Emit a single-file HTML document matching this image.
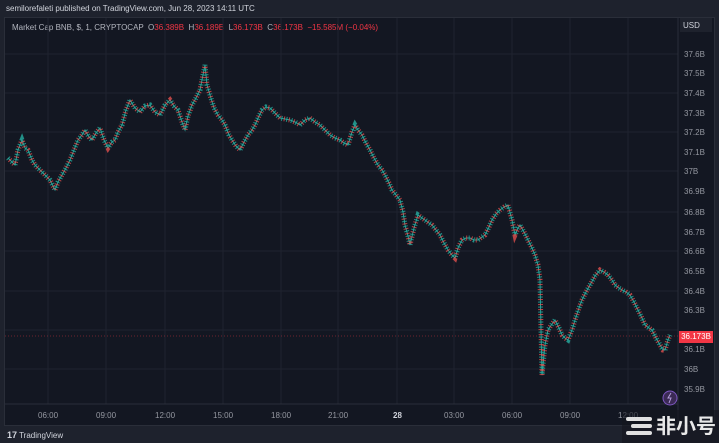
<!DOCTYPE html><html><head><meta charset="utf-8"><style>
body{margin:0;width:719px;height:443px;background:#1e222d;overflow:hidden;font-family:"Liberation Sans","Noto Sans CJK SC",sans-serif;position:relative}
.t{position:absolute;font-size:8px;color:#b2b5be;white-space:nowrap}
.ax{position:absolute;font-size:8px;color:#9598a1}
</style></head><body>
<div class="t" style="left:6px;top:4px;color:#d1d4dc">semilorefaleti published on TradingView.com, Jun 28, 2023 14:11 UTC</div>
<div style="position:absolute;left:4px;top:17px;width:709px;height:407px;background:#131722;border:1px solid #2a2e39"></div>
<div class="t" style="left:12px;top:23px">Market Cap BNB, $, 1, CRYPTOCAP &nbsp;O<span style="color:#f23645">36.389B</span> &nbsp;H<span style="color:#f23645">36.189B</span> &nbsp;L<span style="color:#f23645">36.173B</span> &nbsp;C<span style="color:#f23645">36.173B &nbsp;−15.585M (−0.04%)</span></div>
<div style="position:absolute;left:680px;top:18px;width:32px;height:14px;background:#1e222d;font-size:8px;color:#d1d4dc;padding:3px 0 0 3px;box-sizing:border-box">USD</div>
<svg width="719" height="443" style="position:absolute;left:0;top:0">
<defs><polyline id="p" fill="none" points="8,158 12,162 15,165 18,150 22,140 25,148 28,150 32,160 35,165 40,170 45,175 50,180 55,190 58,182 62,175 66,168 70,160 74,150 78,140 82,135 85,130 89,137 92,140 96,133 100,128 104,140 108,148 112,142 115,140 118,132 122,125 126,110 130,100 135,108 140,112 145,106 150,105 155,112 160,115 165,105 170,100 174,106 178,110 182,122 185,130 188,116 192,105 196,98 200,90 203,75 205,65 207,85 210,95 214,108 218,115 222,120 225,125 229,135 232,140 236,146 240,150 244,142 248,135 252,130 255,125 259,116 262,110 266,107 270,108 275,113 280,118 285,119 290,120 295,122 300,125 305,120 310,118 315,122 320,125 325,130 330,135 335,138 340,140 344,143 348,145 352,132 355,125 358,130 362,135 366,143 370,150 374,158 378,165 382,170 385,175 389,183 392,190 396,195 400,200 403,212 405,225 408,236 410,245 414,228 418,215 422,218 425,220 429,223 432,225 436,230 440,235 444,243 448,250 452,255 455,258 458,248 462,240 466,238 470,238 474,240 478,240 482,237 485,235 489,227 492,220 496,214 500,210 504,207 508,205 512,220 515,235 518,228 520,225 524,232 528,240 532,248 535,255 538,265 540,280 541,330 542,375 545,345 548,330 552,324 555,320 559,328 562,335 565,338 568,340 572,330 575,320 579,308 582,300 586,292 590,285 595,276 600,270 604,272 608,275 612,280 615,285 619,288 622,290 626,292 630,295 634,302 638,310 642,318 645,325 649,328 652,330 656,338 660,345 663,350 665,350 668,340 670,335"/></defs>
<g stroke="#1f2330" stroke-width="1">
<path d="M5 54H678M5 93H678M5 132H678M5 171H678M5 212H678M5 251H678M5 291H678M5 330H678M5 369H678M48 18V404M106 18V404M165 18V404M223 18V404M281 18V404M338 18V404M397 18V404M454 18V404M512 18V404M570 18V404M628 18V404"/>
</g>
<line x1="678" y1="18" x2="678" y2="424" stroke="#2a2e39"/>
<line x1="5" y1="404" x2="678" y2="404" stroke="#2a2e39"/>
<line x1="5" y1="336" x2="678" y2="336" stroke="#f23645" stroke-dasharray="1 2" stroke-width=".6" opacity=".8"/>
<use href="#p" stroke="#26a69a" stroke-width="1"/>
<use href="#p" stroke="#26a69a" stroke-width="5" stroke-dasharray="1 4" opacity=".85"/>
<use href="#p" stroke="#ef5350" stroke-width="5" stroke-dasharray="1 4" stroke-dashoffset="2.5" opacity=".75"/>
<circle cx="670" cy="398" r="7" fill="#3b2a55" stroke="#7e57c2"/>
<path d="M671 393l-3 5h3l-2 5" stroke="#b39ddb" fill="none"/>
</svg>
<div class="ax" style="left:684px;top:50px">37.6B</div><div class="ax" style="left:684px;top:69px">37.5B</div><div class="ax" style="left:684px;top:89px">37.4B</div><div class="ax" style="left:684px;top:109px">37.3B</div><div class="ax" style="left:684px;top:128px">37.2B</div><div class="ax" style="left:684px;top:148px">37.1B</div><div class="ax" style="left:684px;top:167px">37B</div><div class="ax" style="left:684px;top:187px">36.9B</div><div class="ax" style="left:684px;top:208px">36.8B</div><div class="ax" style="left:684px;top:228px">36.7B</div><div class="ax" style="left:684px;top:247px">36.6B</div><div class="ax" style="left:684px;top:267px">36.5B</div><div class="ax" style="left:684px;top:287px">36.4B</div><div class="ax" style="left:684px;top:306px">36.3B</div><div class="ax" style="left:684px;top:345px">36.1B</div><div class="ax" style="left:684px;top:365px">36B</div><div class="ax" style="left:684px;top:385px">35.9B</div>
<div style="position:absolute;left:679px;top:331px;width:34px;height:12px;background:#f23645;color:#fff;font-size:8px;line-height:12px;text-align:center">36.173B</div>
<div class="ax" style="left:38px;top:411px">06:00</div><div class="ax" style="left:96px;top:411px">09:00</div><div class="ax" style="left:155px;top:411px">12:00</div><div class="ax" style="left:213px;top:411px">15:00</div><div class="ax" style="left:271px;top:411px">18:00</div><div class="ax" style="left:328px;top:411px">21:00</div><div class="ax" style="left:393px;top:411px;color:#d1d4dc;font-weight:bold">28</div><div class="ax" style="left:444px;top:411px">03:00</div><div class="ax" style="left:502px;top:411px">06:00</div><div class="ax" style="left:560px;top:411px">09:00</div><div class="ax" style="left:618px;top:411px">12:00</div>
<div class="t" style="left:7px;top:430px;color:#d1d4dc;font-size:8px"><b style="font-size:9px">17</b> TradingView</div>
<div style="position:absolute;left:622px;top:410px;width:97px;height:33px;background:rgba(20,22,30,.6)"></div>
<div style="position:absolute;left:626px;top:416px;width:26px;height:20px">
<div style="position:absolute;left:0;top:1px;width:26px;height:4px;background:#e0e0e0;border-radius:2px"></div>
<div style="position:absolute;left:5px;top:8px;width:21px;height:4px;background:#e0e0e0;border-radius:2px"></div>
<div style="position:absolute;left:0;top:15px;width:26px;height:4px;background:#e0e0e0;border-radius:2px"></div></div>
<div style="position:absolute;left:656px;top:412px;font-size:20px;font-weight:bold;color:#e8e8e8;font-family:'Noto Sans CJK SC',sans-serif;line-height:26px">非小号</div>
</body></html>
